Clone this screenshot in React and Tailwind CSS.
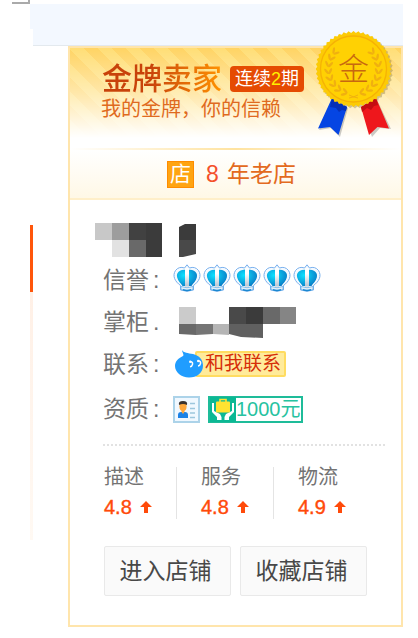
import React from 'react';

const scores = [
  { label: '描述', value: '4.8' },
  { label: '服务', value: '4.8' },
  { label: '物流', value: '4.9' },
];

const crowns = [1, 2, 3, 4, 5];

const leafAngles = [22, 38, 54, 70, 86, 102, 118, 134];

function Medal() {
  const edge = Array.from({ length: 96 }, (_, i) => {
    const r = i % 2 ? 36.2 : 38;
    const a = (i * Math.PI) / 48;
    return `${(37.5 + r * Math.cos(a)).toFixed(2)},${(39 + r * Math.sin(a)).toFixed(2)}`;
  }).join(' ');

  const leaves = leafAngles.map(a => (
    <g key={a} transform={`rotate(${-a} 37.5 39)`}>
      <ellipse cx="37" cy="66" rx="3.3" ry="1.2" transform="rotate(35 37 66)" />
      <ellipse cx="37" cy="62.3" rx="3.3" ry="1.2" transform="rotate(-30 37 62.3)" />
    </g>
  ));

  return (
    <svg width="82" height="110" viewBox="0 0 82 110" className="absolute right-[3px] -top-[18px]" aria-hidden="true">
      <g opacity=".3">
        <polygon points={edge} transform="translate(1.5 1.5)" fill="#6b5a20" />
        <path d="M17 70L32 78 24 107 15 98 3 100ZM46 78L61 70 75 99 64 98 56 107Z" fill="#555" />
      </g>
      <path d="M16 68L31 77 22.500 105 14 97 2 98.500Z" fill="#0545e3" />
      <path d="M16 68L31 77 30 81 26 80 23 82 20 78 14 77Z" fill="#0630b8" />
      <path d="M45 77L60 68 73 98.500 61.500 97 53 105Z" fill="#ee171c" />
      <path d="M45 77L60 68 62 75 58 76 55 80 51 78 46 82Z" fill="#c40d12" />
      <polygon points={edge} fill="#fccb05" />
      <circle cx="37.500" cy="39" r="33" fill="#ffd103" stroke="#f6b205" strokeWidth="1.300" />
      <g fill="#f0b010">
        {leaves}
        <g transform="matrix(-1 0 0 1 75 0)">{leaves}</g>
      </g>
      <path d="M33 68q5-1 9-3M42 68q-5-1-9-3" stroke="#f0b010" fill="none" />
      <text x="37.500" y="50" textAnchor="middle" fontSize="31" fontWeight="300" fill="#c86810">金</text>
    </svg>
  );
}

function Crown() {
  return (
    <svg width="28" height="28" viewBox="0 0 28 28" aria-hidden="true">
      <defs>
        <radialGradient id="crown-blue" cx=".35" cy=".35" r=".7">
          <stop offset="0" stopColor="#0de2ff" />
          <stop offset="1" stopColor="#0a7fc8" />
        </radialGradient>
        <linearGradient id="crown-band" x2="0" y2="1">
          <stop offset=".3" stopColor="#fff" />
          <stop offset="1" stopColor="#b8c6d2" />
        </linearGradient>
      </defs>
      <path d="M11.500 4L14 .8 16.500 4Q22 2 25.500 6.500C29 12 26 17.500 20.500 21.500V26Q14 28.500 7.500 26V21.500C2 17.500-1 12 2.500 6.500Q6 2 11.500 4Z" fill="#f5faff" stroke="#78b0ee" strokeWidth="1" />
      <path d="M14 5.500C6 5.500 3 9 4.200 13.500C5 17 8 19.500 9.500 22H18.500C20 19.500 23 17 23.800 13.500C25 9 22 5.500 14 5.500Z" fill="url(#crown-blue)" />
      <path d="M12 4.500Q14 3.500 16 4.500V22.500H12Z" fill="url(#crown-band)" />
      <path d="M8 22.500Q14 25 20 22.500V25.500Q14 28 8 25.500Z" fill="#e4f1fa" stroke="#6aaee4" strokeWidth=".8" />
      <path d="M10 25.800Q14 27 18 25.800" stroke="#1b88d0" strokeWidth="1.500" fill="none" />
    </svg>
  );
}

function UpArrow() {
  return (
    <svg width="12" height="12" viewBox="0 0 12 12" aria-hidden="true">
      <path d="M6 0L12 6H8V12H4V6H0Z" fill="#ff4a0a" />
    </svg>
  );
}

function Row({ label, mark = ':', children }) {
  return (
    <div className="flex h-[42px] items-center">
      <dt className="flex w-[70px] shrink-0 text-[23px] leading-7 text-[#737373]">
        {label}
        <span className="pl-1">{mark}</span>
      </dt>
      <dd className="flex items-center">{children}</dd>
    </div>
  );
}

export default function App() {
  return (
    <div className="min-h-screen bg-white pr-[15px] pl-[30px] font-['Liberation_Sans','Noto_Sans_CJK_SC',sans-serif]">
      <div className="-ml-[18px] h-1 w-[18px] border-r-2 border-b-2 border-[#aaa]" />
      <div className="h-[25px] bg-[#f3f8ff]" />
      <div className="ml-[3px] h-[17px] border-b border-[#e3e9ee] bg-[#f3f8ff]" />

      <div className="flex">
        <div className="mt-[179px] mr-[35px] w-[3px] shrink-0">
          <div className="h-[67px] bg-[#ff560b]" />
          <div className="h-[248px] bg-linear-to-b from-[#fff0e6] to-[#fff9f3]" />
        </div>

        <main className="min-w-0 flex-1 border-2 border-[#ffe5ac]">
          <header className="relative">
            <Medal />
            <div className="h-[100px] bg-[linear-gradient(to_bottom,#ffffff00,#ffffff73_45%,#fff_90%),repeating-linear-gradient(45deg,#ffd464_0px,#ffd464_10px,#ffde76_10px,#ffde76_20px)] pt-[13px] pl-[32px]">
              <div className="flex items-center">
                <h1 className="bg-linear-to-r from-[#c8420a] from-40% to-[#ff9200] bg-clip-text text-[30px] leading-9 font-medium text-transparent">金牌卖家</h1>
                <span className="ml-2 rounded-sm bg-[#e54b02] px-[5px] text-[18px] leading-[26px] whitespace-nowrap text-white">
                  连续<span className="text-[#fff000]">2</span>期
                </span>
              </div>
              <p className="-ml-px text-[20px] leading-6 text-[#df6a20]">我的金牌，你的信赖</p>
            </div>
            <div className="h-0.5 bg-linear-to-r from-transparent via-[#ffe3a0] to-transparent" />
            <div className="flex h-[50px] items-center justify-center border-b-2 border-[#ffefc9] bg-linear-to-b from-white to-[#fff8e6] pr-2 text-[23px] text-[#e36a20]">
              <span className="mr-3 flex size-[27px] items-center justify-center border border-[#ff8c00] bg-[#ffa412] text-[21px] text-white">店</span>
              <span className="mr-2 text-[#f4502a]">8</span>
              <span>年老店</span>
            </div>
          </header>

          <div className="pt-[23px] pr-4 pb-[29px] pl-[33px]">
            <svg width="102" height="36" viewBox="0 0 102 36" className="-ml-2" aria-hidden="true">
              <path d="M0 0h17v17H0z" fill="#c8c8c8" />
              <path d="M17 0h17v17H17z" fill="#9d9d9d" />
              <path d="M34 0h17v17H34z" fill="#414141" />
              <path d="M51 0h16v34H51z" fill="#3b3b3b" />
              <path d="M34 17h17v17H34z" fill="#696969" />
              <path d="M17 17h17v17H17z" fill="#e2e2e2" />
              <path d="M84 4L90 1H101V17H84z" fill="#3b3b3b" />
              <path d="M84 17H101V31L88 34H84z" fill="#494949" />
            </svg>

            <dl>
              <Row label="信誉">
                <span className="-mt-1 flex gap-0.5">
                  {crowns.map(n => <Crown key={n} />)}
                </span>
              </Row>
              <Row label="掌柜" mark=".">
                <svg width="124" height="32" viewBox="0 0 124 32" className="ml-[6px]" aria-hidden="true">
                  <path d="M0 1h17v17H0z" fill="#cbcbcb" />
                  <path d="M50 1h17v17H50z" fill="#494949" />
                  <path d="M67 1h17v17H67z" fill="#3b3b3b" />
                  <path d="M84 1h17v17H84z" fill="#696969" />
                  <path d="M101 1h16v17h-16z" fill="#858585" />
                  <path d="M0 18H17V29L0 28z" fill="#696969" />
                  <path d="M17 18H34V28L17 29z" fill="#757575" />
                  <path d="M34 18H50V29L34 28z" fill="#b5b5b5" />
                  <path d="M50 18H84V32L62 31 50 28z" fill="#606060" />
                </svg>
              </Row>
              <Row label="联系">
                <a href="#contact" className="flex items-center">
                  <svg width="28" height="28" viewBox="0 0 28 28" className="relative ml-[2px]" aria-hidden="true">
                    <path d="M7 0C8.500 3 13 3 18 4C24.500 5.500 28 10 28 15.500C28 23 22 27.500 14 27.500C6 27.500 0 22 0 16C0 11.500 3 8.500 8 6C9.500 5 7 2 7 0Z" fill="#209dff" />
                    <path d="M15.500 11.500q2.500 .5 2 2.800t-2.500 2.500M23.500 10.800q2.500 .5 2 2.800t-2.500 2.500" fill="none" stroke="#fff" strokeWidth="1.500" />
                    <circle cx="15.200" cy="11.700" r="1.200" fill="#fff" />
                    <circle cx="23.200" cy="11" r="1.200" fill="#fff" />
                  </svg>
                  <span className="-ml-2 rounded-xs border-2 border-[#ffdc61] bg-[#ffeb9b] pr-[3px] pl-2 text-[19px] leading-[22px] whitespace-nowrap text-[#d62e08]">和我联系</span>
                </a>
              </Row>
              <div className="pt-[3px]">
                <Row label="资质">
                  <svg width="27" height="27" viewBox="0 0 27 27" aria-hidden="true">
                    <path d="M1 1h25v25H1z" fill="#f0f8ff" stroke="#acd3e9" strokeWidth="2" />
                    <path d="M5 22v-3q0-3 3-3h4q3 0 3 3v3z" fill="#1b82e7" />
                    <ellipse cx="10" cy="10.500" rx="3.600" ry="4.500" fill="#ffa83c" />
                    <path d="M8.500 14h3v2l-1.500 2-1.500-2z" fill="#ffa83c" />
                    <path d="M6 9q-1-4 4-4t4 4q-4-2-8 0z" fill="#3b3330" />
                    <path d="M17 7.500h5M17 12.500h5M17 17h5M17 21.500h5" stroke="#9cc6dd" strokeWidth="1.600" />
                  </svg>
                  <span className="ml-2 flex h-[27px] items-center border-2 border-[#1ebc99] bg-white">
                    <svg width="26" height="25" viewBox="0 0 26 25" className="bg-[#0bb894]" aria-hidden="true">
                      <path d="M2 6h2v8l6 3 1.500 3v3H7V20L2 15ZM22 6h2v9l-5 5v3h-4.500v-3l1.500-3 6-3Z" fill="#fff" />
                      <path d="M10 5V2.500h6V5" fill="none" stroke="#ffe331" strokeWidth="1.600" />
                      <rect x="6" y="4.500" width="14" height="11" rx="1" fill="#ffe331" />
                    </svg>
                    <span className="text-[20px] leading-[23px] whitespace-nowrap text-[#27c2a0]">1000元</span>
                  </span>
                </Row>
              </div>
            </dl>

            <div className="mt-[14px] border-t-2 border-dotted border-[#e2e2e2]" />

            <dl className="mt-[21px] flex divide-x divide-[#e4e4e4]">
              {scores.map(s => (
                <div key={s.label} className="h-[52px] w-[97px] pl-6 text-[20px] first:w-[74px] first:pl-px">
                  <dt className="leading-5 text-[#737373]">{s.label}</dt>
                  <dd className="mt-2 flex items-center gap-2 leading-6 text-[#ff4a0a]">
                    <span className="[-webkit-text-stroke:0.4px]">{s.value}</span>
                    <UpArrow />
                  </dd>
                </div>
              ))}
            </dl>

            <div className="mt-[27px] flex gap-[9px] pl-px">
              {['进入店铺', '收藏店铺'].map(text => (
                <button key={text} type="button" className="h-[50px] w-[127px] rounded-xs border border-[#e9e9e9] bg-[#fafafa] pr-1 text-[23px] whitespace-nowrap text-[#484848]">
                  {text}
                </button>
              ))}
            </div>
          </div>
        </main>
      </div>
    </div>
  );
}
